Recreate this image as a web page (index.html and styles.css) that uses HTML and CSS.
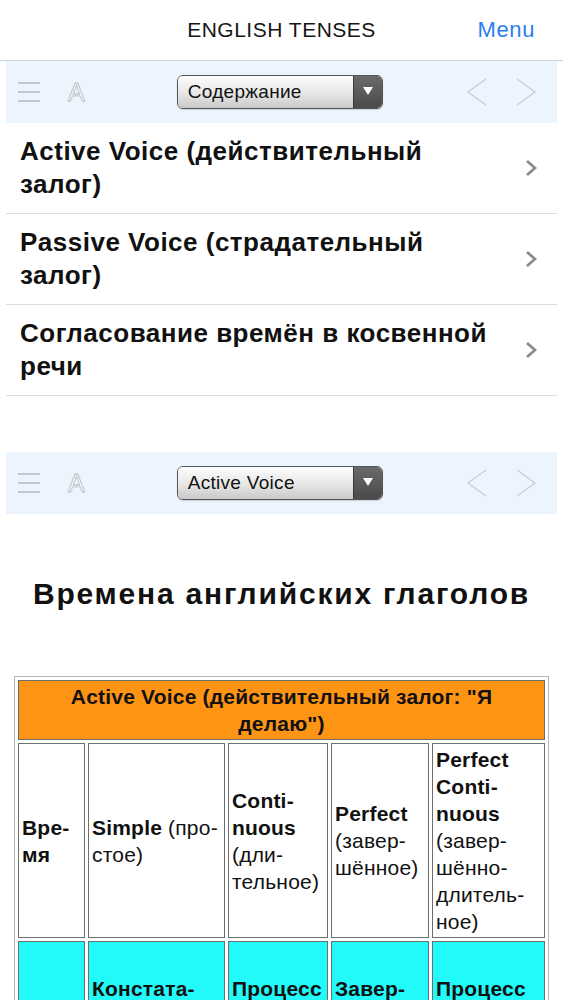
FILE: index.html
```html
<!DOCTYPE html>
<html lang="ru">
<head>
    <meta charset="UTF-8">
    <meta name="viewport" content="width=device-width, initial-scale=1.0">
    <title>English Tenses</title>
    <link rel="stylesheet" href="styles.css">
</head>
<body>
    <header class="navbar">
        <span></span>
        <span class="nav-title">ENGLISH TENSES</span>
        <a class="nav-menu" href="#">Menu</a>
    </header>

    <main class="content">
        <div class="toolbar">
            <span class="burger"><i></i><i></i><i></i></span>
            <span class="font-btn">A</span>
            <div class="select">
                <span class="select-label">Содержание</span>
                <span class="select-arrow"></span>
            </div>
            <svg class="arrow prev" width="22" height="30" viewBox="0 0 22 30"><polyline points="20,2 2,15 20,28" /></svg>
            <svg class="arrow next" width="22" height="30" viewBox="0 0 22 30"><polyline points="2,2 20,15 2,28" /></svg>
        </div>

        <ul class="toc">
            <li>
                <span class="toc-text">Active Voice (действительный залог)</span>
                <svg class="chevron" width="12" height="18" viewBox="0 0 12 18"><polyline points="2,2 10,9 2,16" /></svg>
            </li>
            <li>
                <span class="toc-text">Passive Voice (страдательный залог)</span>
                <svg class="chevron" width="12" height="18" viewBox="0 0 12 18"><polyline points="2,2 10,9 2,16" /></svg>
            </li>
            <li>
                <span class="toc-text">Согласование времён в косвенной речи</span>
                <svg class="chevron" width="12" height="18" viewBox="0 0 12 18"><polyline points="2,2 10,9 2,16" /></svg>
            </li>
        </ul>

        <div class="toolbar toolbar-page">
            <span class="burger"><i></i><i></i><i></i></span>
            <span class="font-btn">A</span>
            <div class="select">
                <span class="select-label">Active Voice</span>
                <span class="select-arrow"></span>
            </div>
            <svg class="arrow prev" width="22" height="30" viewBox="0 0 22 30"><polyline points="20,2 2,15 20,28" /></svg>
            <svg class="arrow next" width="22" height="30" viewBox="0 0 22 30"><polyline points="2,2 20,15 2,28" /></svg>
        </div>

        <h1 class="page-title">Времена английских глаголов</h1>

        <table class="tenses">
            <colgroup>
                <col class="c1">
                <col class="c2">
                <col class="c3">
                <col class="c4">
                <col>
            </colgroup>
            <tr>
                <th colspan="5" class="voice">Active Voice (действительный залог: "Я делаю")</th>
            </tr>
            <tr class="head-row">
                <td><b>Вре&shy;мя</b></td>
                <td><b>Simple</b> (про&shy;стое)</td>
                <td><b>Conti&shy;nuous</b> (дли&shy;тельное)</td>
                <td><b>Perfect</b> (завер&shy;шённое)</td>
                <td><b>Perfect Conti&shy;nuous</b> (завер&shy;шённо-длитель&shy;ное)</td>
            </tr>
            <tr class="aspect-row">
                <td></td>
                <td><b>Констата&shy;ция факта</b></td>
                <td><b>Процесс</b></td>
                <td><b>Завер&shy;шённость</b></td>
                <td><b>Процесс</b></td>
            </tr>
        </table>
    </main>
</body>
</html>
```

FILE: styles.css
```css
body {
    margin: 0;
    font-family: "Liberation Sans", Arial, sans-serif;
    background: #fff;
    color: #111;
}

/* top bar */
.navbar {
    display: grid;
    grid-template-columns: 1fr auto 1fr;
    align-items: center;
    height: 60px;
    border-bottom: 1px solid #d4d4d4;
}
.nav-title {
    font-size: 21px;
    letter-spacing: 0.5px;
    color: #151515;
}
.nav-menu {
    justify-self: end;
    margin-right: 28px;
    font-size: 22px;
    letter-spacing: 0.6px;
    color: #2a7ef0;
    text-decoration: none;
}

.content {
    margin: 0 6px;
}

/* reader toolbar */
.toolbar {
    display: flex;
    align-items: center;
    height: 62px;
    padding: 0 20px 0 12px;
    background: #ecf4fd;
}
.burger {
    display: flex;
    flex-direction: column;
    gap: 7px;
    width: 22px;
}
.burger i {
    display: block;
    height: 2px;
    background: #c4c8cc;
}
.font-btn {
    margin-left: 28px;
    font-size: 25px;
    color: #fff;
    -webkit-text-stroke: 0.8px #b4b8bc;
}
.select {
    display: flex;
    margin-left: 92px;
    width: 204px;
    height: 32px;
    border: 1px solid #555;
    border-radius: 6px;
    overflow: hidden;
    box-shadow: 0 1px 1px rgba(0, 0, 0, 0.15);
}
.select-label {
    flex: 1;
    padding-left: 10px;
    line-height: 32px;
    font-size: 19px;
    letter-spacing: 0.3px;
    color: #111;
    background: linear-gradient(#fdfdfd, #e6e6e6 55%, #c9c9c9);
}
.select-arrow {
    position: relative;
    width: 28px;
    background: linear-gradient(#6a6a6a, #4a4a4a);
    border-left: 1px solid #3a3a3a;
}
.select-arrow::after {
    content: "";
    position: absolute;
    left: 9px;
    top: 11px;
    border-left: 5px solid transparent;
    border-right: 5px solid transparent;
    border-top: 8px solid #fff;
}
.arrow polyline {
    fill: none;
    stroke: #c9cdd2;
    stroke-width: 1.3;
}
.arrow.prev {
    margin-left: auto;
}
.arrow.next {
    margin-left: 27px;
}

/* table of contents */
.toc {
    list-style: none;
    margin: 0;
    padding: 0;
}
.toc li {
    display: flex;
    align-items: center;
    padding: 12px 20px 12px 14px;
    border-bottom: 1px solid #dcdcdc;
}
.toc-text {
    flex: 1;
    max-width: 490px;
    font-size: 26px;
    letter-spacing: 0.5px;
    font-weight: bold;
    line-height: 33px;
}
.chevron {
    margin-left: auto;
}
.chevron polyline {
    fill: none;
    stroke: #8a8a8f;
    stroke-width: 2.8;
}

.toolbar-page {
    margin-top: 56px;
}

.page-title {
    margin: 63px 0 65px;
    text-align: center;
    font-size: 30px;
    letter-spacing: 1.8px;
    line-height: 34px;
}

/* tenses table */
.tenses {
    table-layout: fixed;
    width: calc(100% - 16px);
    margin: 0 8px;
    border: 1px solid #b5b5b5;
    border-spacing: 3px;
    font-size: 21px;
    letter-spacing: 0.2px;
    line-height: 27px;
}
.tenses th,
.tenses td {
    padding: 2px 3px;
    border: 1px solid #6e6e6e;
    vertical-align: middle;
    text-align: left;
    font-weight: normal;
}
.tenses .voice {
    text-align: center;
    font-weight: bold;
    padding: 2px 36px;
    background: #fd9414;
}
.c1 { width: 67px; }
.c2 { width: 137px; }
.c3 { width: 100px; }
.c4 { width: 98px; }
.aspect-row td {
    background: #22f9f9;
    vertical-align: top;
    padding-top: 33px;
    height: 120px;
}
```
